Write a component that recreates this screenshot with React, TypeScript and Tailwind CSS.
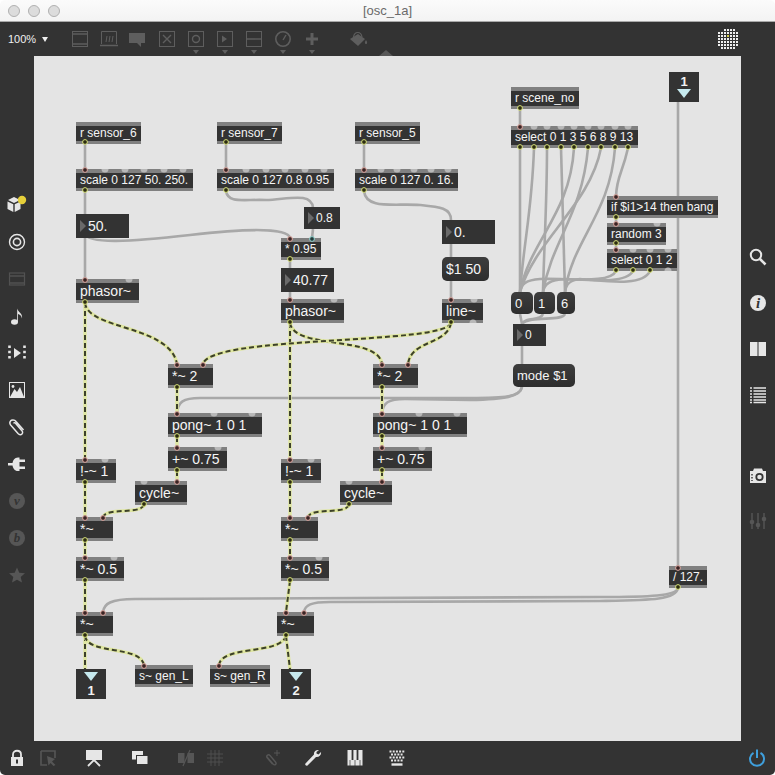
import { ReactNode } from "react";

type BoxProps = { pos: string; text: string; big?: boolean };

const Obj = ({ pos, text, big }: BoxProps) => (
  <div className={`absolute flex flex-col bg-[#333333] ${big ? "h-6 text-[14px]" : "h-[22px] text-[12px]"} ${pos}`}>
    <div className="h-1 bg-[#808080]" />
    <div className="flex flex-1 items-center whitespace-nowrap pb-[2px] pl-1 leading-none text-[#f5f5f5]">{text}</div>
    <div className="h-[3px] bg-[#808080]" />
  </div>
);

const Num = ({ pos, text, big }: BoxProps) => (
  <div className={`absolute flex items-center bg-[#333333] whitespace-nowrap leading-none text-[#f5f5f5] ${big ? "h-6 text-[14px]" : "h-[22px] text-[12px]"} ${pos}`}>
    <span className="ml-1 mr-[2px] h-0 w-0 border-y-[6px] border-l-[6px] border-y-transparent border-l-[#6a6a6a]" />
    {text}
  </div>
);

const Msg = ({ pos, text, big }: BoxProps) => (
  <div className={`absolute flex items-center rounded-[5px] bg-gradient-to-b from-[#3d3d3d] to-[#2e2e2e] pl-1 whitespace-nowrap leading-none text-[#f5f5f5] ${big ? "text-[14px]" : "text-[13px]"} ${pos}`}>
    {text}
  </div>
);

const Inlet = ({ pos, n }: { pos: string; n: number }) => (
  <div className={`absolute flex h-[30px] w-[30px] flex-col items-center bg-[#333333] pt-[3px] text-[13px] font-bold leading-none text-[#f2f2f2] ${pos}`}>
    {n}
    <span className="mt-[1px] h-0 w-0 border-x-[7px] border-t-[9px] border-x-transparent border-t-[#c6e9ee]" />
  </div>
);

const Outlet = ({ pos, n }: { pos: string; n: number }) => (
  <div className={`absolute flex h-[30px] w-[30px] flex-col items-center bg-[#333333] pt-[3px] text-[13px] font-bold leading-none text-[#f2f2f2] ${pos}`}>
    <span className="mb-[3px] h-0 w-0 border-x-[7px] border-t-[9px] border-x-transparent border-t-[#c6e9ee]" />
    {n}
  </div>
);

// control wires, screen coordinates
const wires = [
  "M85 143V169",
  "M85 191V279",
  "M85 234C88 244 130 242 190 235S288 228 290 238",
  "M226 143V169",
  "M226 191C228 204 244 199 266 200C285 200 312 191 313 208",
  "M313 229L312 238",
  "M290 260V299",
  "M364 143V169",
  "M364 191C366 210 395 203 420 205C440 207 451 208 451 220",
  "M451 244V299",
  "M520 109V126",
  "M520 148V292",
  "M534 148C532 210 524 240 520 292",
  "M547 148C547 200 544 250 543 292",
  "M561 148C562 200 564 250 565 292",
  "M574 148C570 215 530 240 520 292",
  "M588 148C582 215 552 240 543 292",
  "M601 148C590 205 535 240 520 292",
  "M615 148C610 215 572 240 565 292",
  "M628 148C622 175 617 175 616 196",
  "M616 218V223",
  "M616 244V249",
  "M616 271C610 284 570 278 540 279C526 280 521 284 520 292",
  "M633 271C626 284 590 280 565 279C550 280 544 284 543 292",
  "M650 271C642 288 600 280 580 279C570 280 566 284 565 292",
  "M520 314L522 324",
  "M543 314C540 322 526 316 522 324",
  "M565 314C562 322 530 315 522 324",
  "M522 346V364",
  "M522 387C520 397 505 398 470 398L200 398C183 398 178 402 177 413",
  "M522 387C520 397 505 399 470 400L405 399C388 399 383 403 382 413",
  "M678 102V566",
  "M678 588C676 596 650 597 600 597L135 599C110 599 104 604 103 612",
  "M678 588C676 600 650 600 600 601L330 602C311 602 305 605 304 612",
];

// signal wires, drawn twice for the dashes
const signals = [
  "M85 303V459",
  "M85 303C88 330 170 325 177 364",
  "M290 323V459",
  "M290 323C294 350 378 335 382 364",
  "M451 323C445 345 210 335 203 364",
  "M451 323C447 345 411 340 408 364",
  "M177 388V413",
  "M382 388V413",
  "M177 437V447",
  "M382 437V447",
  "M177 471V481",
  "M382 471V481",
  "M85 483V517",
  "M290 483V517",
  "M144 505C140 515 106 507 103 517",
  "M349 505C345 515 311 507 308 517",
  "M85 541V557",
  "M290 541V557",
  "M85 581V612",
  "M290 581L286 612",
  "M85 636V669",
  "M85 636C88 655 140 645 144 665",
  "M286 636C280 655 222 645 219 665",
  "M286 636L290 669",
];

const inlets = [
  [85, 169], [226, 169], [364, 169], [85, 279], [290, 238], [290, 299], [451, 299],
  [520, 126], [616, 196], [616, 223], [616, 249], [177, 364], [203, 364], [382, 364],
  [408, 364], [177, 413], [382, 413], [177, 447], [382, 447], [177, 481], [382, 481],
  [85, 459], [290, 459], [85, 517], [103, 517], [290, 517], [308, 517], [85, 557],
  [290, 557], [85, 612], [103, 612], [286, 612], [304, 612], [144, 665], [219, 665], [678, 567],
];

const outlets = [
  [85, 143], [226, 143], [364, 143], [85, 191], [226, 191], [364, 191], [85, 303], [290, 323],
  [451, 323], [290, 260], [520, 109], [520, 148], [534, 148], [547, 148], [561, 148], [574, 148],
  [588, 148], [601, 148], [615, 148], [628, 148], [616, 218], [616, 244], [616, 271], [633, 271],
  [650, 271], [177, 388], [382, 388], [177, 437], [382, 437], [177, 471], [382, 471], [85, 483],
  [290, 483], [144, 505], [349, 505], [85, 541], [290, 541], [85, 581], [290, 581], [85, 636],
  [286, 636], [678, 588],
];

// unconnected ports on the top edge of a box
const bumps = [
  [105, 169], [125, 169], [144, 169], [164, 169], [183, 169],
  [246, 169], [266, 169], [285, 169], [305, 169], [324, 169],
  [381, 169], [397, 169], [414, 169], [431, 169], [448, 169],
  [129, 279], [334, 299], [474, 299],
  [534, 126], [547, 126], [561, 126], [574, 126], [588, 126], [601, 126], [615, 126], [628, 126],
  [657, 223], [633, 249], [650, 249], [668, 249],
  [214, 413], [252, 413], [419, 413], [457, 413], [218, 447], [422, 447],
  [105, 459], [311, 459], [144, 481], [349, 481], [114, 557], [319, 557],
];

// and on the bottom edge
const bumpsLow = [
  [473, 323], [668, 271],
];

const Patch = () => (
  <div className="relative flex-1 bg-[#e4e4e4]">
    <svg className="absolute inset-0 h-full w-full" viewBox="34 56 707 685" fill="none">
      {wires.map((d) => (
        <path key={d} d={d} stroke="#a8a8a8" strokeWidth={2.6} />
      ))}
      {signals.map((d) => (
        <g key={d}>
          <path d={d} stroke="#dfe6a0" strokeWidth={3.4} />
          <path d={d} stroke="#3c4029" strokeWidth={2} strokeDasharray="5 3" />
        </g>
      ))}
    </svg>

    <Obj pos="left-[42px] top-[66px] w-[65px]" text="r sensor_6" />
    <Obj pos="left-[42px] top-[113px] w-[117px]" text="scale 0 127 50. 250." />
    <Num pos="left-[42px] top-[158px] w-[53px]" text="50." big />
    <Obj pos="left-[42px] top-[223px] w-[63px]" text="phasor~" big />

    <Obj pos="left-[183px] top-[66px] w-[65px]" text="r sensor_7" />
    <Obj pos="left-[183px] top-[113px] w-[117px]" text="scale 0 127 0.8 0.95" />
    <Num pos="left-[270px] top-[151px] w-[36px]" text="0.8" />
    <Obj pos="left-[247px] top-[182px] w-[40px]" text="* 0.95" />
    <Num pos="left-[247px] top-[212px] w-[53px]" text="40.77" big />
    <Obj pos="left-[247px] top-[243px] w-[63px]" text="phasor~" big />

    <Obj pos="left-[321px] top-[66px] w-[65px]" text="r sensor_5" />
    <Obj pos="left-[321px] top-[113px] w-[103px]" text="scale 0 127 0. 16." />
    <Num pos="left-[408px] top-[164px] w-[53px]" text="0." big />
    <Msg pos="left-[408px] top-[201px] h-6 w-[47px]" text="$1 50" big />
    <Obj pos="left-[408px] top-[243px] w-[41px]" text="line~" big />

    <Obj pos="left-[477px] top-[31px] w-[68px]" text="r scene_no" />
    <Obj pos="left-[477px] top-[70px] w-[127px]" text="select 0 1 3 5 6 8 9 13" />
    <Obj pos="left-[573px] top-[140px] w-[111px]" text="if $i1>14 then bang" />
    <Obj pos="left-[573px] top-[167px] w-[59px]" text="random 3" />
    <Obj pos="left-[573px] top-[193px] w-[70px]" text="select 0 1 2" />
    <Inlet pos="left-[635px] top-[16px]" n={1} />

    <Msg pos="left-[477px] top-[236px] h-[22px] w-[22px]" text="0" />
    <Msg pos="left-[500px] top-[236px] h-[22px] w-[21px]" text="1" />
    <Msg pos="left-[523px] top-[236px] h-[22px] w-[18px]" text="6" />
    <Num pos="left-[479px] top-[268px] w-[33px]" text="0" />
    <Msg pos="left-[479px] top-[308px] h-[23px] w-[62px]" text="mode $1" />

    <Obj pos="left-[134px] top-[308px] w-[45px]" text="*~ 2" big />
    <Obj pos="left-[339px] top-[308px] w-[45px]" text="*~ 2" big />
    <Obj pos="left-[134px] top-[357px] w-[94px]" text="pong~ 1 0 1" big />
    <Obj pos="left-[339px] top-[357px] w-[94px]" text="pong~ 1 0 1" big />
    <Obj pos="left-[134px] top-[391px] w-[59px]" text="+~ 0.75" big />
    <Obj pos="left-[339px] top-[391px] w-[59px]" text="+~ 0.75" big />
    <Obj pos="left-[42px] top-[403px] w-[40px]" text="!-~ 1" big />
    <Obj pos="left-[247px] top-[403px] w-[40px]" text="!-~ 1" big />
    <Obj pos="left-[101px] top-[425px] w-[52px]" text="cycle~" big />
    <Obj pos="left-[306px] top-[425px] w-[52px]" text="cycle~" big />
    <Obj pos="left-[42px] top-[461px] w-[37px]" text="*~" big />
    <Obj pos="left-[247px] top-[461px] w-[37px]" text="*~" big />
    <Obj pos="left-[42px] top-[501px] w-[48px]" text="*~ 0.5" big />
    <Obj pos="left-[247px] top-[501px] w-[48px]" text="*~ 0.5" big />
    <Obj pos="left-[42px] top-[556px] w-[37px]" text="*~" big />
    <Obj pos="left-[243px] top-[556px] w-[37px]" text="*~" big />
    <Obj pos="left-[101px] top-[609px] w-[58px]" text="s~ gen_L" />
    <Obj pos="left-[176px] top-[609px] w-[60px]" text="s~ gen_R" />
    <Obj pos="left-[635px] top-[510px] w-[38px]" text="/ 127." />
    <Outlet pos="left-[42px] top-[613px]" n={1} />
    <Outlet pos="left-[247px] top-[613px]" n={2} />

    <svg className="pointer-events-none absolute inset-0 h-full w-full" viewBox="34 56 707 685">
      {bumps.map(([x, y]) => (
        <path key={`b${x}-${y}`} d={`M${x - 3.5} ${y}A3.5 3.5 0 0 0 ${x + 3.5} ${y}Z`} fill="#b8b8b8" />
      ))}
      {bumpsLow.map(([x, y]) => (
        <path key={`l${x}-${y}`} d={`M${x - 3.5} ${y}A3.5 3.5 0 0 1 ${x + 3.5} ${y}Z`} fill="#b8b8b8" />
      ))}
      {inlets.map(([x, y]) => (
        <circle key={`i${x}-${y}`} cx={x} cy={y + 1} r={2.4} fill="#3a2424" stroke="#dda79f" strokeWidth={1} />
      ))}
      <circle cx={312} cy={239} r={2.4} fill="#243a3a" stroke="#8fd3cf" strokeWidth={1} />
      {outlets.map(([x, y]) => (
        <circle key={`o${x}-${y}`} cx={x} cy={y - 1} r={2.4} fill="#2c2c12" stroke="#d8e27a" strokeWidth={1} />
      ))}
    </svg>
  </div>
);

const Ic = ({ children, w = 20, h = 20 }: { children: ReactNode; w?: number; h?: number }) => (
  <svg width={w} height={h} viewBox={`0 0 ${w} ${h}`} fill="none">
    {children}
  </svg>
);

const dim = "#5e5e5e";
const lite = "#e6e6e6";

const TopSlot = ({ children, caret }: { children: ReactNode; caret?: boolean }) => (
  <div className="relative flex h-[34px] w-[29px] items-center justify-center">
    {children}
    {caret && (
      <span className="absolute bottom-[2px] h-0 w-0 border-x-[3px] border-t-[4px] border-x-transparent border-t-[#5e5e5e]" />
    )}
  </div>
);

const TopBar = () => (
  <div className="relative flex h-[34px] items-center bg-[#333333]">
    <div className="flex w-[65px] items-center pl-2 text-[11px] text-[#f0f0f0]">
      100%
      <span className="ml-[6px] h-0 w-0 border-x-[3px] border-t-[5px] border-x-transparent border-t-[#f0f0f0]" />
    </div>
    <TopSlot>
      <Ic>
        <rect x="2.5" y="2.5" width="15" height="15" stroke={dim} />
        <path d="M2 5H18M2 15H18" stroke={dim} strokeWidth={1.4} />
      </Ic>
    </TopSlot>
    <TopSlot>
      <Ic>
        <path d="M2.5 15V2.5H17.5V15" stroke={dim} />
        <path d="M1 16.5H19" stroke={dim} strokeWidth={1.4} />
        <path d="M7 13L8 7M10 13L11 7M13 13L14 7" stroke={dim} />
      </Ic>
    </TopSlot>
    <TopSlot>
      <Ic>
        <path d="M1 4H17V14H13V18L9 14H1Z" fill={dim} />
      </Ic>
    </TopSlot>
    <TopSlot>
      <Ic>
        <rect x="2.5" y="2.5" width="15" height="15" stroke={dim} />
        <path d="M6 6L14 14M14 6L6 14" stroke={dim} strokeWidth={1.4} />
      </Ic>
    </TopSlot>
    <TopSlot caret>
      <Ic>
        <rect x="2.5" y="2.5" width="15" height="15" stroke={dim} />
        <circle cx="10" cy="10" r="3.5" stroke={dim} strokeWidth={1.4} />
      </Ic>
    </TopSlot>
    <TopSlot caret>
      <Ic>
        <rect x="2.5" y="2.5" width="15" height="15" stroke={dim} />
        <path d="M7 6.5L12 10L7 13.5Z" fill={dim} />
      </Ic>
    </TopSlot>
    <TopSlot caret>
      <Ic>
        <rect x="2.5" y="2.5" width="15" height="15" stroke={dim} />
        <path d="M3 10H17" stroke={dim} strokeWidth={1.4} />
      </Ic>
    </TopSlot>
    <TopSlot caret>
      <Ic>
        <circle cx="10" cy="10" r="7.2" stroke={dim} strokeWidth={1.6} />
        <path d="M10 11L13 6" stroke={dim} strokeWidth={1.4} />
      </Ic>
    </TopSlot>
    <TopSlot caret>
      <Ic>
        <path d="M10 4V16M4 10H16" stroke={dim} strokeWidth={3} />
      </Ic>
    </TopSlot>
    <div className="ml-[17px]">
      <TopSlot>
        <Ic>
          <path d="M2 10L10 5L17 10L10 17Z" fill={dim} />
          <path d="M5.5 8C6.5 2 13 2 14 8" stroke={dim} strokeWidth={1.2} />
          <path d="M18 11C19.5 13 19.5 15 18 15C16.5 15 16.5 13 18 11Z" fill={dim} />
        </Ic>
      </TopSlot>
    </div>
    <span className="absolute bottom-0 left-[379px] h-0 w-0 border-x-[7px] border-b-[6px] border-x-transparent border-b-[#585858]" />
    <div className="ml-auto mr-[36px]">
      <Ic w={21} h={21}>
        {[0, 1, 2, 3, 4, 5, 6].flatMap((c) =>
          [0, 1, 2, 3, 4, 5, 6].map((r) =>
            (c === 0 || c === 6 || c === 1) && (r === 0 || r === 6) && !(c === 1 && r === 6) ? null : (
              <rect
                key={`${c}-${r}`}
                x={c * 3}
                y={r * 3}
                width={2}
                height={2}
                fill={c === 3 && r === 2 ? "#d6d04a" : "#eeeeee"}
              />
            )
          )
        )}
      </Ic>
    </div>
  </div>
);

const LeftSlot = ({ children }: { children: ReactNode }) => (
  <div className="flex h-[37px] w-[34px] items-center justify-center">{children}</div>
);

const LeftBar = () => (
  <div className="flex w-[34px] flex-col bg-[#333333] pt-[130px]">
    <LeftSlot>
      <Ic w={24} h={20}>
        <path d="M9 2L15 5L9 8L3 5Z" fill={lite} />
        <path d="M2.5 6.5L8.3 9.3V17L2.5 14Z" fill={lite} />
        <path d="M15.5 6.5L9.7 9.3V17L15.5 14Z" fill={lite} />
        <circle cx="17" cy="5" r="4.2" fill="#e5cf3a" />
      </Ic>
    </LeftSlot>
    <LeftSlot>
      <Ic>
        <circle cx="10" cy="10" r="7.5" stroke={lite} strokeWidth={1.4} />
        <circle cx="10" cy="10" r="3.6" stroke={lite} strokeWidth={1.6} />
      </Ic>
    </LeftSlot>
    <LeftSlot>
      <Ic>
        <rect x="2.5" y="4" width="15" height="12" stroke="#525252" strokeWidth={1.2} />
        <path d="M2 7H18M2 14H18" stroke="#525252" strokeWidth={1.6} />
      </Ic>
    </LeftSlot>
    <LeftSlot>
      <Ic>
        <ellipse cx="7.5" cy="16" rx="3.5" ry="2.7" fill={lite} />
        <path d="M10.2 16V2.5C11 6.5 16 7 15 12.5C14.5 9.5 12.5 8.5 11 8V16Z" fill={lite} />
      </Ic>
    </LeftSlot>
    <LeftSlot>
      <Ic>
        <path d="M2.5 2.5V18M17.5 2.5V18" stroke={lite} strokeWidth={2.6} strokeDasharray="2.5 2.8" />
        <path d="M7 5L14 10L7 15Z" fill={lite} />
      </Ic>
    </LeftSlot>
    <LeftSlot>
      <Ic>
        <rect x="2.5" y="2.5" width="15" height="15" stroke={lite} />
        <path d="M3 17L7.5 9L10 12L13 7L17 17Z" fill={lite} />
        <circle cx="6" cy="6.5" r="1.4" fill={lite} />
      </Ic>
    </LeftSlot>
    <LeftSlot>
      <Ic>
        <path
          d="M16.5 13L9 4.5C7.5 2.5 4.5 2.5 3.5 4C2.3 5.5 3 7.5 4.5 9L11 16.5C12.5 18 14 18 15 17C16 16 15.8 14.5 14.5 13.2L8.5 6.2C7.8 5.4 6.8 5.6 6.6 6.4"
          stroke={lite}
          strokeWidth={1.5}
        />
      </Ic>
    </LeftSlot>
    <LeftSlot>
      <Ic>
        <path d="M1 9H6V11.5H1Z" fill={lite} />
        <path d="M5.5 10.2C5.5 6.5 7.5 3.5 11 3.5H12.5V17H11C7.5 17 5.5 14 5.5 10.2Z" fill={lite} />
        <path d="M12 5.5H18V8H12ZM12 12.5H18V15H12Z" fill={lite} />
      </Ic>
    </LeftSlot>
    <LeftSlot>
      <div className="flex h-4 w-4 items-center justify-center rounded-full bg-[#565656] font-['Liberation_Serif',serif] text-[13px] font-bold italic leading-none text-[#333333]">
        v
      </div>
    </LeftSlot>
    <LeftSlot>
      <div className="flex h-4 w-4 items-center justify-center rounded-full bg-[#565656] font-['Liberation_Serif',serif] text-[13px] font-bold italic leading-none text-[#333333]">
        b
      </div>
    </LeftSlot>
    <LeftSlot>
      <Ic>
        <path d="M10 2.5L12.3 7.7L18 8.3L13.7 12L15 17.5L10 14.7L5 17.5L6.3 12L2 8.3L7.7 7.7Z" fill="#565656" />
      </Ic>
    </LeftSlot>
  </div>
);

const RightSlot = ({ children }: { children: ReactNode }) => (
  <div className="flex h-[46px] w-[34px] items-center justify-center">{children}</div>
);

const RightBar = () => (
  <div className="flex w-[34px] flex-col bg-[#333333] pt-[178px]">
    <RightSlot>
      <Ic>
        <circle cx="8" cy="8" r="5.2" stroke={lite} strokeWidth={2} />
        <path d="M12 12L17.5 17.5" stroke={lite} strokeWidth={2.6} />
      </Ic>
    </RightSlot>
    <RightSlot>
      <div className="flex h-4 w-4 items-center justify-center rounded-full bg-[#e6e6e6] font-['Liberation_Serif',serif] text-[15px] font-bold italic leading-none text-[#333333]">
        i
      </div>
    </RightSlot>
    <RightSlot>
      <Ic>
        <path d="M2 3H9.5V17H2ZM10.5 3H18V17H10.5Z" fill={lite} />
      </Ic>
    </RightSlot>
    <RightSlot>
      <Ic>
        {[3, 6, 9, 12, 15, 17.5].map((y) => (
          <path key={y} d={`M2 ${y}H4M5.5 ${y}H18`} stroke={lite} strokeWidth={1.5} />
        ))}
      </Ic>
    </RightSlot>
    <div className="mt-[35px]">
      <RightSlot>
        <Ic>
          <path d="M2 5H5L6 2.5H14L15 5H18V17H2Z" fill={lite} />
          <circle cx="11.5" cy="11" r="3.2" stroke="#333333" strokeWidth={1.8} />
          <path d="M4 8V15" stroke="#333333" strokeWidth={1.4} strokeDasharray="1.5 1.5" />
        </Ic>
      </RightSlot>
    </div>
    <div className="-mt-[1px]">
      <RightSlot>
        <Ic>
          <path d="M4 2V18M10 2V18M16 2V18" stroke="#565656" strokeWidth={1.4} />
          <circle cx="4" cy="11" r="2.3" fill="#565656" />
          <circle cx="10" cy="14" r="2.3" fill="#565656" />
          <circle cx="16" cy="8" r="2.3" fill="#565656" />
        </Ic>
      </RightSlot>
    </div>
  </div>
);

const BotSlot = ({ children, cls }: { children: ReactNode; cls: string }) => (
  <div className={`flex h-[34px] w-[28px] items-center justify-center ${cls}`}>{children}</div>
);

const BottomBar = () => (
  <div className="flex h-[34px] bg-[#333333]">
    <BotSlot cls="ml-[3px]">
      <Ic>
        <path d="M6 9V6.5C6 1.5 14 1.5 14 6.5V9" stroke={lite} strokeWidth={1.8} />
        <path d="M4 9H16V18H4Z" fill={lite} />
        <rect x="9" y="11.5" width="2" height="4" fill="#333333" />
      </Ic>
    </BotSlot>
    <BotSlot cls="ml-[3px]">
      <Ic>
        <path d="M3 3H17V10M9 17H3V3" stroke="#565656" strokeWidth={1.6} />
        <path d="M9 8L17 11L14 13.5L17.5 17L15.5 18L12.5 15L10.5 17.5Z" fill="#565656" />
      </Ic>
    </BotSlot>
    <BotSlot cls="ml-[18px]">
      <Ic w={20} h={18}>
        <path d="M2 1H18V11H2Z" fill={lite} />
        <path d="M10 11L4 17M10 11L16 17" stroke={lite} strokeWidth={1.8} />
      </Ic>
    </BotSlot>
    <BotSlot cls="ml-[18px]">
      <Ic>
        <rect x="2" y="3" width="11" height="8.5" fill={lite} />
        <rect x="6.5" y="7.5" width="11.5" height="9" fill={lite} stroke="#333333" />
      </Ic>
    </BotSlot>
    <BotSlot cls="ml-[18px]">
      <Ic>
        <path d="M2 5H8.5V15H2ZM11.5 5H18V15H11.5Z" fill="#565656" />
        <path d="M14 2L7 18" stroke="#565656" strokeWidth={1.2} />
      </Ic>
    </BotSlot>
    <BotSlot cls="ml-[1px]">
      <Ic>
        <path d="M6 2V18M10 2V18M14 2V18M2 6H18M2 10H18M2 14H18" stroke="#4f4f4f" />
      </Ic>
    </BotSlot>
    <BotSlot cls="ml-[29px]">
      <Ic>
        <path d="M5 9L11 16C13 18 15 16 13.5 14L8 7.5C6.5 6 4 7.5 5 9.5L10.5 16" stroke="#565656" strokeWidth={1.4} />
        <path d="M15 2V8M12 5H18" stroke="#565656" />
      </Ic>
    </BotSlot>
    <BotSlot cls="ml-[13px]">
      <Ic>
        <path d="M16 2C13 1.5 10.5 3.5 11 6.5L2.5 15.5C1.5 16.5 3 18.5 4.5 17.5L13 9C16 9.5 18.5 7 18 4L15.5 6.5L13.5 5.5L13.5 4Z" fill={lite} />
      </Ic>
    </BotSlot>
    <BotSlot cls="ml-[14px]">
      <Ic w={18} h={18}>
        <rect x="1.5" y="1" width="15" height="15.5" fill={lite} />
        <path d="M6.5 1V11M11.5 1V11" stroke="#333333" strokeWidth={1.8} />
        <path d="M4 11V17M9 11V17M14 11V17" stroke="#333333" strokeWidth={0.7} />
      </Ic>
    </BotSlot>
    <BotSlot cls="ml-[14px]">
      <Ic w={18} h={18}>
        <path d="M1.5 2.5H16.5M3 5.5H15M1.5 8.5H16.5M3 11.5H15" stroke={lite} strokeWidth={2} strokeDasharray="2 1.2" />
        <path d="M3.5 15.5H14.5" stroke={lite} strokeWidth={2.4} />
      </Ic>
    </BotSlot>
    <BotSlot cls="ml-auto mr-1">
      <Ic>
        <path d="M6.5 4.8A7 7 0 1 0 13.5 4.8" stroke="#3f9fdc" strokeWidth={2} />
        <path d="M10 1.5V10" stroke="#3f9fdc" strokeWidth={2} />
      </Ic>
    </BotSlot>
  </div>
);

export default function App() {
  return (
    <div className="h-[775px] w-[775px] bg-white font-['Liberation_Sans',Arial,sans-serif]">
      <div className="flex h-full flex-col overflow-hidden rounded-[5px]">
        <div className="flex h-[22px] items-center border-b border-[#a9a9a9] bg-gradient-to-b from-[#fbfbfb] to-[#f3f3f3]">
          <div className="flex w-[69px] items-center gap-2 pl-2">
            <span className="h-3 w-3 rounded-full border border-[#b0b0b0] bg-[#dcdcdc]" />
            <span className="h-3 w-3 rounded-full border border-[#b0b0b0] bg-[#dcdcdc]" />
            <span className="h-3 w-3 rounded-full border border-[#b0b0b0] bg-[#dcdcdc]" />
          </div>
          <div className="flex-1 pr-[69px] text-center text-[13px] text-[#6a6a6a]">[osc_1a]</div>
        </div>
        <TopBar />
        <div className="flex h-[685px]">
          <LeftBar />
          <Patch />
          <RightBar />
        </div>
        <BottomBar />
      </div>
    </div>
  );
}
